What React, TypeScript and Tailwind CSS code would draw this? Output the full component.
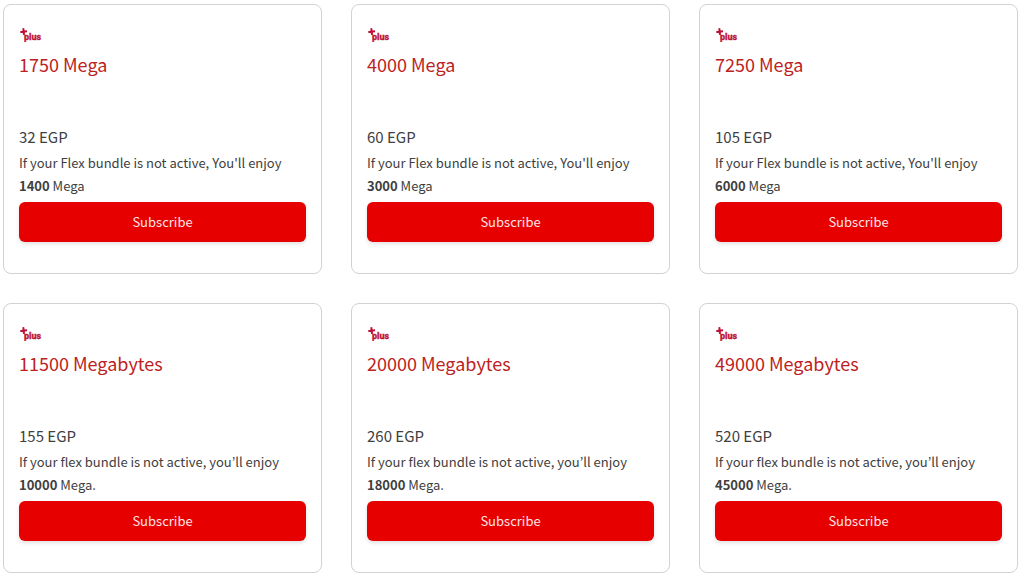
type Bundle = {
  title: string;
  price: string;
  note: string;
  amount: string;
  unit: string;
};

const bundles: Bundle[] = [
  { title: "1750 Mega", price: "32 EGP", note: "If your Flex bundle is not active, You'll enjoy", amount: "1400", unit: "Mega" },
  { title: "4000 Mega", price: "60 EGP", note: "If your Flex bundle is not active, You'll enjoy", amount: "3000", unit: "Mega" },
  { title: "7250 Mega", price: "105 EGP", note: "If your Flex bundle is not active, You'll enjoy", amount: "6000", unit: "Mega" },
  { title: "11500 Megabytes", price: "155 EGP", note: "If your flex bundle is not active, you’ll enjoy", amount: "10000", unit: "Mega." },
  { title: "20000 Megabytes", price: "260 EGP", note: "If your flex bundle is not active, you’ll enjoy", amount: "18000", unit: "Mega." },
  { title: "49000 Megabytes", price: "520 EGP", note: "If your flex bundle is not active, you’ll enjoy", amount: "45000", unit: "Mega." },
];

function PlusLogo() {
  return (
    <svg viewBox="0 0 24 14" className="h-[14px] w-6" role="img" aria-label="plus">
      <path d="M3.4 0.3 L5.2 0.1 L5.6 2.4 L8 2.2 L8.1 4.2 L5.8 4.6 L6.1 6.8 L4.1 7.1 L3.7 4.9 L1.4 5.1 L1.1 3.2 L3.5 2.7 Z" fill="#bd1238" />
      <text x="5" y="12" fontSize="9" fontWeight="800" fill="#bd1238" stroke="#bd1238" strokeWidth="0.3" fontFamily="Roboto, sans-serif">
        plus
      </text>
    </svg>
  );
}

function BundleCard({ title, price, note, amount, unit }: Bundle) {
  return (
    <article className="flex flex-col rounded-lg border border-[#d2d2d2] bg-white px-[15px] pt-[23px] pb-[31px]">
      <PlusLogo />
      <h2 className="mt-2 text-[18px] leading-7 text-[#bd2222]">{title}</h2>
      <p className="mt-[47px] text-[15px] leading-6">{price}</p>
      <p className="mt-[2px] text-[13px] leading-[23px]">
        {note}
        <br />
        <strong className="font-bold">{amount}</strong> {unit}
      </p>
      <button
        type="button"
        className="mt-[5px] h-10 w-full cursor-pointer rounded-md bg-[#e60000] text-[13px] text-[#ffe5e5] shadow-[0_2px_4px_rgba(0,0,0,0.12)]"
      >
        Subscribe
      </button>
    </article>
  );
}

export default function App() {
  return (
    <main className="grid grid-cols-3 gap-[29px] bg-white pt-1 pr-[6px] pl-[3px] font-['Noto_Sans_CJK_KR','Noto_Sans',sans-serif] text-[#404040]">
      {bundles.map((bundle) => (
        <BundleCard key={bundle.title} {...bundle} />
      ))}
    </main>
  );
}
